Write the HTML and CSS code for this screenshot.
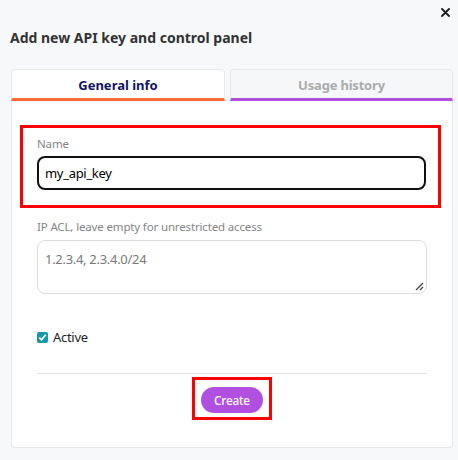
FILE: index.html
```html
<!DOCTYPE html>
<html>
<head>
<meta charset="utf-8">
<link rel="stylesheet" href="styles.css">
</head>
<body>
<div class="dialog">
  <div class="topbar"><button class="close" aria-label="Close">
    <svg width="9" height="9" viewBox="0 0 9 9"><path d="M1 1 L8 8 M8 1 L1 8" stroke="#1b1b1b" stroke-width="1.8" stroke-linecap="round"/></svg>
  </button></div>
  <h1 class="title">Add new API key and control panel</h1>
  <div class="tabs">
    <div class="tab tab-active">General info</div>
    <div class="tab tab-inactive">Usage history</div>
  </div>
  <div class="panel">
    <div class="highlight field-name">
      <label class="label">Name</label>
      <div class="input">my_api_key</div>
    </div>
    <div class="field-acl">
      <label class="label">IP ACL, leave empty for unrestricted access</label>
      <div class="textarea">
        <span class="placeholder">1.2.3.4, 2.3.4.0/24</span>
        <svg class="grip" width="9" height="9" viewBox="0 0 9 9"><path d="M8 1 L1 8 M8 5 L5 8" stroke="#444" stroke-width="1.3"/></svg>
      </div>
    </div>
    <div class="check-row">
      <span class="checkbox"><svg width="9" height="9" viewBox="0 0 9 9"><path d="M1.3 4.6 L3.6 6.8 L7.8 1.8" stroke="#fff" stroke-width="1.7" fill="none"/></svg></span>
      <span class="check-label">Active</span>
    </div>
    <hr class="divider">
    <div class="actions">
      <div class="highlight btn-wrap"><button class="btn">Create</button></div>
    </div>
  </div>
</div>
</body>
</html>
```
FILE: styles.css
```css
* { box-sizing: border-box; }
html, body { margin: 0; padding: 0; }
body {
  background: #f7f8fa;
  font-family: "Noto Sans", "Open Sans", sans-serif;
  color: #222;
  width: 458px;
  height: 460px;
  overflow: hidden;
}
.dialog { padding: 0 5px 0 11px; }
.topbar { height: 24px; display: flex; justify-content: flex-end; align-items: center; padding-top: 1px; }
.close { border: 0; background: none; padding: 0; width: 9px; height: 9px; margin-right: 3px; display: flex; }
.title {
  margin: 4px 0 0 -1px;
  font-size: 14px;
  font-weight: 700;
  color: #333;
  line-height: 20px;
  height: 41px;
}
.tabs { display: grid; grid-template-columns: 214px 1fr; gap: 5px; }
.tab {
  height: 32px;
  border: 1px solid #e7e9ed;
  border-bottom: 3px solid;
  border-radius: 4px 4px 0 0;
  display: flex; align-items: center; justify-content: center;
  font-size: 13px; font-weight: 700;
  padding-top: 1px;
}
.tab-active { background: #fff; color: #13136b; border-bottom-color: #ff6b35; }
.tab-inactive { background: #f6f7f9; color: #ababab; border-bottom-color: #b14fdf; letter-spacing: -0.2px; }
.panel {
  background: #fff;
  border: 1px solid #e6e8eb;
  border-top: 0;
  border-radius: 0 0 4px 4px;
  padding: 24px 25px 25px 25px;
  height: 347px;
}
.highlight { border: 3px solid #ff0000; }
.field-name { margin: 0 -14px 0 -17px; padding: 8px 12px 15px 14px; }
.label { display: block; font-size: 11.5px; letter-spacing: -0.15px; line-height: 16px; color: #858585; margin-bottom: 4px; }
.input {
  height: 34px;
  border: 2px solid #111;
  border-radius: 8px;
  padding: 0 6px;
  display: flex; align-items: center;
  font-size: 13px; letter-spacing: -0.3px; color: #000;
}
.field-acl { margin-top: 11px; }
.field-acl .label { margin-bottom: 5px; }
.textarea {
  position: relative;
  height: 54px;
  border: 1px solid #dcdcdc;
  border-radius: 8px;
  padding: 8px 7px;
  font-size: 13px;
  letter-spacing: -0.3px;
  line-height: 20px;
}
.placeholder { color: #7a7a7a; }
.grip { position: absolute; right: 2px; bottom: 2px; }
.check-row { margin-top: 33px; height: 20px; display: flex; align-items: center; gap: 5px; }
.checkbox {
  width: 11px; height: 11px; border-radius: 2px; background: #1499a6;
  display: flex; align-items: center; justify-content: center;
}
.check-label { font-size: 13px; letter-spacing: -0.3px; color: #222; }
.divider { border: 0; border-top: 1px solid #dedede; margin: 26px 0 3px; }
.actions { display: flex; justify-content: center; }
.btn-wrap { padding: 7px 6px 4px; }
.btn {
  height: 26px; width: 62px;
  border: 0; border-radius: 13px;
  background: #b150e0; color: #fff;
  font-family: inherit; font-size: 11.8px; font-weight: 500;
  letter-spacing: -0.2px;
  display: flex; align-items: center; justify-content: center;
  padding: 0 0 1px;
}
```
